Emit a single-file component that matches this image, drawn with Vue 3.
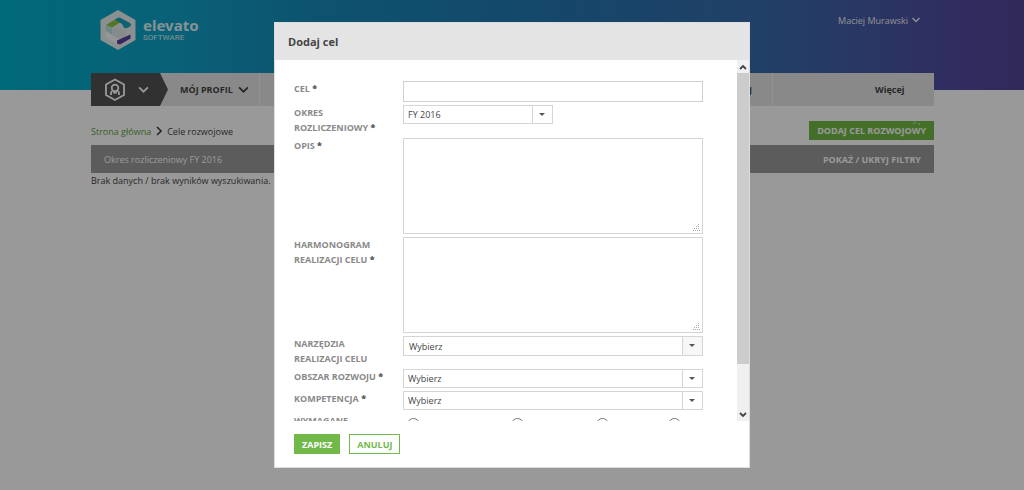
<script setup>
import { ref } from 'vue'

const goal = ref('')
const period = ref('FY 2016')
const description = ref('')
const schedule = ref('')
const tools = ref('')
const area = ref('')
const competence = ref('')
const level = ref('')
const levels = ['zerowe', 'umiem', 'umie', 'en']
</script>

<template>
  <div class="page">
    <div class="top">
      <header class="brand-row">
        <a class="brand" href="#" aria-label="elevato software">
          <svg class="logo" viewBox="0 0 36 40" aria-hidden="true">
            <path d="M18 0 L35.500 10 V30 L18 40 L0.500 30 V10Z" fill="#e6eeee" />
            <path d="M12 18 L18.500 18.500 L22 20.500 L26 18.500 V26.500 L19 29.500 L12 25Z" fill="#dfe9ea" />
            <path d="M6 15 L12 18 V25 L19 29 L17 34 L6 27.500Z" fill="#fafafa" />
            <path d="M6 15 L12 18 V25 L6 21Z" fill="#b9dfe4" />
            <path d="M6 15 L16 9 L21 12 L12 17.500Z" fill="#8cc63f" />
            <path d="M15 9.500 L17.500 8 Q19 7 20.500 8 L30 13 Q32 15 30 16.500 L27 18 Q25 18.500 24 17.500 L22 14Z" fill="#16a3bd" />
            <path d="M17 30.500 L30.500 24.500 V28.500 L20 34.500 L17 33.500Z" fill="#5b3fa0" />
          </svg>
          <span class="brand-text">
            <strong>elevato</strong>
            <small>SOFTWARE</small>
          </span>
        </a>
        <button class="user" type="button">
          Maciej Murawski
          <svg class="chev" viewBox="0 0 10 6" aria-hidden="true"><path d="M1.500 1 L5 4.500 L8.500 1" /></svg>
        </button>
      </header>
      <nav class="nav">
        <button class="nav-home" type="button" aria-label="Menu">
          <svg class="hex" viewBox="0 0 22 24" aria-hidden="true">
            <path d="M11 1.500 L20 6.500 V17 L11 22 L2 17 V6.500Z" />
            <path d="M7 17 V15 Q7 13.500 8.500 13 M15 17 V15 Q15 13.500 13.500 13" />
            <circle cx="11" cy="10" r="3.300" />
            <path d="M9.500 15.500 L11 13.500 L12.500 15.500" />
          </svg>
          <svg class="chev big" viewBox="0 0 10 6" aria-hidden="true"><path d="M1 1 L5 5 L9 1" /></svg>
        </button>
        <a class="nav-item profile" href="#">
          MÓJ PROFIL
          <svg class="chev big" viewBox="0 0 10 6" aria-hidden="true"><path d="M1 1 L5 5 L9 1" /></svg>
        </a>
        <a class="nav-item goals" href="#">MÓJ ROZWÓJ</a>
        <a class="nav-item more" href="#">Więcej</a>
      </nav>
    </div>

    <main class="content">
      <div class="crumb-row">
        <div class="crumbs">
          <a href="#">Strona główna</a>
          <svg viewBox="0 0 6 10" aria-hidden="true"><path d="M1 1 L5 5 L1 9" /></svg>
          <span>Cele rozwojowe</span>
        </div>
        <button class="add" type="button">
          DODAJ CEL ROZWOJOWY
          <svg viewBox="0 0 10 4" aria-hidden="true"><path d="M1 3 L4 1 M6 2 L8 4" /></svg>
        </button>
      </div>
      <div class="filter">
        <span>Okres rozliczeniowy FY 2016</span>
        <button type="button">POKAŻ / UKRYJ FILTRY</button>
      </div>
      <p class="empty">Brak danych / brak wyników wyszukiwania.</p>
    </main>

    <div class="overlay">
      <section class="modal" role="dialog" aria-labelledby="modal-title">
        <h2 id="modal-title">Dodaj cel</h2>
        <div class="scroll">
          <form id="goal-form" class="form" @submit.prevent>
            <label for="goal">CEL <b>*</b></label>
            <input id="goal" v-model="goal" class="text" type="text">

            <label for="period">OKRES ROZLICZENIOWY <b>*</b></label>
            <span class="select short">
              <select id="period" v-model="period"><option>FY 2016</option></select>
            </span>

            <label for="description">OPIS <b>*</b></label>
            <span class="area">
              <textarea id="description" v-model="description"></textarea>
              <svg viewBox="0 0 7 7" aria-hidden="true"><path d="M5 0h1v1h-1z M3 2h1v1h-1z M5 2h1v1h-1z M1 4h1v1h-1z M3 4h1v1h-1z M5 4h1v1h-1z M0 6h1v1h-1z M2 6h1v1h-1z M4 6h1v1h-1z M6 6h1v1h-1z" /></svg>
            </span>

            <label for="schedule">HARMONOGRAM REALIZACJI CELU <b>*</b></label>
            <span class="area">
              <textarea id="schedule" v-model="schedule"></textarea>
              <svg viewBox="0 0 7 7" aria-hidden="true"><path d="M5 0h1v1h-1z M3 2h1v1h-1z M5 2h1v1h-1z M1 4h1v1h-1z M3 4h1v1h-1z M5 4h1v1h-1z M0 6h1v1h-1z M2 6h1v1h-1z M4 6h1v1h-1z M6 6h1v1h-1z" /></svg>
            </span>

            <label for="tools">NARZĘDZIA<br>REALIZACJI CELU</label>
            <span class="select multi">
              <select id="tools" v-model="tools"><option value="">Wybierz</option></select>
            </span>

            <label for="area">OBSZAR ROZWOJU <b>*</b></label>
            <span class="select">
              <select id="area" v-model="area"><option value="">Wybierz</option></select>
            </span>

            <label for="competence">KOMPETENCJA <b>*</b></label>
            <span class="select">
              <select id="competence" v-model="competence"><option value="">Wybierz</option></select>
            </span>

            <span id="level-label" class="label">WYMAGANE</span>
            <div class="radios" role="radiogroup" aria-labelledby="level-label">
              <label v-for="item in levels" :key="item">
                <input v-model="level" type="radio" name="level" :value="item">{{ item }}
              </label>
            </div>
          </form>
          <div class="bar" aria-hidden="true">
            <span class="bar-end"><svg viewBox="0 0 8 6"><path d="M1 5 L4 2 L7 5" /></svg></span>
            <span class="thumb"></span>
            <span class="track"></span>
            <span class="bar-end"><svg viewBox="0 0 8 6"><path d="M1 1 L4 4 L7 1" /></svg></span>
          </div>
        </div>
        <footer>
          <button class="save" type="submit" form="goal-form">ZAPISZ</button>
          <button class="cancel" type="button">ANULUJ</button>
        </footer>
      </section>
    </div>
  </div>
</template>

<style>
body { margin: 0; background: #fff; overflow: hidden; }
</style>

<style scoped>
.page {
  min-height: 100vh;
  font-family: "Open Sans", "Noto Sans", sans-serif;
  font-size: 9px;
  color: #444;
}
.page *, .page *::after { box-sizing: border-box; }
button, input, select, textarea { font: inherit; color: inherit; margin: 0; border-radius: 0; }
button { border: 0; padding: 0; background: none; cursor: pointer; }
a { text-decoration: none; color: inherit; }
svg { display: block; flex: none; }
.chev { width: 10px; height: 6px; fill: none; stroke: currentColor; stroke-width: 1.5; }
.chev.big { width: 11px; height: 7px; stroke-width: 1.6; }

.top {
  padding: 0 90px 0 91px;
  background: linear-gradient(90deg, #00b0cc 0, #10a0c6 18%, #168bbb 30%, #2476b2 55%, #376cac 73%, #455ba6 85%, #524aa0 94%, #544596 100%) no-repeat 0 0 / 100% 90px;
}
.brand-row { display: flex; justify-content: space-between; align-items: flex-start; height: 73px; padding: 10px 13px 0 9px; }
.brand { display: flex; align-items: center; gap: 7px; color: #dff3f6; }
.logo { width: 36px; height: 40px; }
.brand-text { display: flex; flex-direction: column; }
.brand-text strong { font-family: "Noto Sans", sans-serif; font-size: 15px; line-height: 15px; }
.brand-text small { font-family: Roboto, sans-serif; font-size: 8px; line-height: 9px; }
.user { display: flex; align-items: center; gap: 3px; height: 20px; color: #eee; }

.nav { display: flex; height: 33px; background: #e4e4e4; font-weight: 700; color: #444; }
.nav-home { position: relative; display: flex; align-items: center; gap: 12px; width: 69px; padding-left: 13px; background: #525252; color: #fff; }
.nav-home::after {
  content: "";
  position: absolute;
  left: 69px;
  top: 0;
  width: 8px;
  height: 33px;
  background: #525252;
  clip-path: polygon(0 0, 100% 50%, 0 100%);
}
.hex { width: 22px; height: 24px; fill: none; stroke: currentColor; stroke-width: 1.8; }
.nav-item { display: flex; align-items: center; border-right: 1px solid #f4f4f4; }
.profile { gap: 5px; padding: 0 10px 0 20px; }
.goals { flex: 1; justify-content: flex-end; padding-right: 20px; }
.more { width: 161px; padding-left: 102px; border: 0; }

.content { padding: 15px 90px 0 91px; }
.crumb-row { display: flex; justify-content: space-between; height: 24px; }
.crumbs { display: flex; align-items: center; gap: 5px; height: 20px; }
.crumbs a { color: #62a03e; }
.crumbs svg { width: 6px; height: 10px; fill: none; stroke: #444; stroke-width: 1.6; }
.add { position: relative; height: 19px; padding: 0 8px; background: #72b945; color: #fff; font-weight: 700; }
.add svg { position: absolute; top: 0; right: 12px; width: 10px; height: 4px; fill: none; stroke: #d5e8ca; }
.filter { display: flex; justify-content: space-between; align-items: center; height: 28px; padding: 0 13px; background: #999; color: #fff; }
.filter button { font-weight: 700; }
.empty { margin: 0; line-height: 16px; }

.overlay {
  position: fixed;
  inset: 0;
  display: flex;
  justify-content: center;
  padding: 22px;
  background: rgba(0, 0, 0, 0.4);
}
.modal { display: flex; flex-direction: column; width: 476px; background: #fff; border: 1px solid #ddd; }
h2 { margin: 0; padding: 0 13px; background: #e4e4e4; font-size: 11px; line-height: 37px; color: #444; }
.scroll { display: flex; flex: 1; min-height: 0; overflow: hidden; }
.form {
  display: grid;
  flex: 1;
  min-width: 0;
  grid-template-columns: 100px minmax(0, 1fr);
  column-gap: 9px;
  row-gap: 3px;
  align-content: start;
  align-items: start;
  padding: 21px 34px 0 19px;
}
.form > label, .label { line-height: 15px; font-weight: 700; color: #8a8a8a; }
.form > label b { color: #555; }
.text { width: 100%; height: 21px; border: 1px solid #d0d0d0; background: #fff; }
.select { position: relative; display: block; height: 19px; border: 1px solid #d5d5d5; background: #fff; }
.select.short { width: 150px; }
.select.multi { height: 20px; }
.select select { display: block; width: 100%; height: 100%; padding: 0 24px 0 4px; border: 0; background: none; appearance: none; }
.select.multi select { padding-left: 5px; background: linear-gradient(#f7f7f7, #f7f7f7) no-repeat 100% 0 / 19px 100%; }
.select::before { content: ""; position: absolute; right: 19px; top: 0; bottom: 0; border-left: 1px solid #d5d5d5; }
.select::after { content: ""; position: absolute; right: 7px; top: 7px; border: 3px solid transparent; border-top-color: #555; border-bottom: 0; }
.area { position: relative; display: block; height: 96px; }
.area textarea { display: block; width: 100%; height: 100%; border: 1px solid #d5d5d5; resize: none; }
.area svg { position: absolute; right: 3px; bottom: 3px; width: 7px; height: 7px; fill: #aaa; }
.radios { display: grid; grid-template-columns: 104px 85px 72px 1fr; padding: 4px 0 0 4px; line-height: 15px; }
.radios label { display: flex; align-items: center; gap: 4px; }
.radios input { flex: none; width: 13px; height: 13px; }

.bar { display: flex; flex: none; flex-direction: column; width: 12px; background: #f0f0f0; }
.bar-end { display: flex; align-items: center; justify-content: center; height: 13px; }
.bar-end svg { width: 8px; height: 6px; fill: none; stroke: #444; stroke-width: 1.8; }
.thumb { flex: 87; background: #ccc; }
.track { flex: 13; }

footer { display: flex; gap: 9px; padding: 13px 19px; }
footer button { height: 20px; padding: 0 7px; border: 1px solid #72b94a; font-weight: 700; }
.save { background: #72b94a; color: #fff; }
.cancel { background: #fff; color: #72b94a; }
</style>
